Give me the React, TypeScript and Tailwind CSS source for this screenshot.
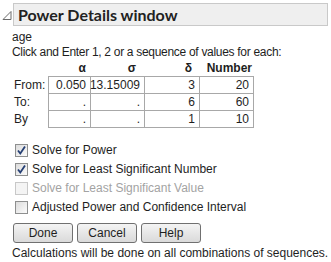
import React from 'react'

const font = { fontFamily: '"Liberation Sans", Arial, sans-serif' }
const titleFont = { fontFamily: 'Lato, "Liberation Sans", sans-serif' }

function Check({ checked, disabled }: { checked?: boolean; disabled?: boolean }) {
  return (
    <span
      className={[
        'flex h-[13px] w-[13px] shrink-0 items-center justify-center border',
        disabled
          ? 'border-[#c8c8c8] bg-[#f4f4f4]'
          : 'border-[#8e8f8f] bg-gradient-to-br from-[#dcdcdc] to-[#fbfbfb]',
      ].join(' ')}
    >
      {checked && (
        <svg width="11" height="11" viewBox="0 0 11 11">
          <path d="M2 5.5 L4.3 8.5 L9 1.5" fill="none" stroke="#253f74" strokeWidth="1.8" />
        </svg>
      )}
    </span>
  )
}

const rows = [
  { label: 'From:', vals: ['0.050', '13.15009', '3', '20'] },
  { label: 'To:', vals: ['.', '.', '6', '60'] },
  { label: 'By', vals: ['.', '.', '1', '10'] },
]

const widths = ['w-[42px]', 'w-[54px]', 'w-[55px]', 'w-[54px]']

export default function App() {
  return (
    <div className="h-[262px] w-[331px] whitespace-nowrap bg-white text-[12px] leading-none text-[#1e1e1e]" style={font}>
      <div className="flex items-start pt-[3px]">
        <svg width="12" height="20" viewBox="0 0 12 20" className="ml-[1px] mt-[3px]">
          <path d="M10 5.5 L10 13.5 L2 13.5 Z" fill="none" stroke="#6b6b6b" strokeWidth="1" />
        </svg>
        <div
          className="flex h-[23px] w-[315px] items-center border border-[#c9c9c9] bg-[#efefef] pl-[4px] text-[16px] font-bold text-[#222]"
          style={titleFont}
        >
          Power Details window
        </div>
      </div>

      <div className="pl-[12px]">
        <div className="flex h-[16px] items-center pt-[5px]">age</div>
        <div className="mt-[2px] flex h-[16px] items-center tracking-[-0.3px]">
          Click and Enter 1, 2 or a sequence of values for each:
        </div>

        <div className="flex h-[14px] items-center pt-[1px] font-bold">
          <span className="w-[36px]" />
          <span className="w-[42px] pr-[4px] text-right">α</span>
          <span className="w-[54px] pr-[8px] text-right">σ</span>
          <span className="w-[55px] pr-[7px] text-right">δ</span>
          <span className="w-[54px] pr-[1px] text-right">Number</span>
        </div>

        <div className="mt-[2px] flex">
          <div className="flex w-[36px] flex-col">
            {rows.map((r) => (
              <div key={r.label} className="flex h-[17px] items-center pl-[2px]">
                {r.label}
              </div>
            ))}
          </div>
          <div className="border-l border-t border-[#a8a8a8]">
            {rows.map((r) => (
              <div key={r.label} className="flex">
                {r.vals.map((v, i) => (
                  <div
                    key={i}
                    className={`flex h-[17px] items-center justify-end border-b border-r border-[#a8a8a8] bg-white pr-[4px] ${widths[i]}`}
                  >
                    {v}
                  </div>
                ))}
              </div>
            ))}
          </div>
        </div>

        <div className="mt-[15px] flex flex-col gap-[5px] pl-[3px]">
          <label className="flex h-[14px] items-center gap-[4px]">
            <Check checked />
            <span>Solve for Power</span>
          </label>
          <label className="flex h-[14px] items-center gap-[4px]">
            <Check checked />
            <span>Solve for Least Significant Number</span>
          </label>
          <label className="flex h-[14px] items-center gap-[4px] text-[#a3a3a3]">
            <Check disabled />
            <span>Solve for Least Significant Value</span>
          </label>
          <label className="flex h-[14px] items-center gap-[4px]">
            <Check />
            <span>Adjusted Power and Confidence Interval</span>
          </label>
        </div>

        <div className="mt-[9px] flex gap-[4px] pl-[1px]">
          {['Done', 'Cancel', 'Help'].map((b) => (
            <button
              key={b}
              className="flex h-[20px] w-[60px] items-center justify-center rounded-[3px] border border-[#707070] bg-gradient-to-b from-[#f4f4f4] to-[#dadada] text-[12px] text-[#1e1e1e]"
            >
              {b}
            </button>
          ))}
        </div>

        <div className="mt-[3px] flex h-[14px] items-center">
          Calculations will be done on all combinations of sequences.
        </div>
      </div>
    </div>
  )
}
